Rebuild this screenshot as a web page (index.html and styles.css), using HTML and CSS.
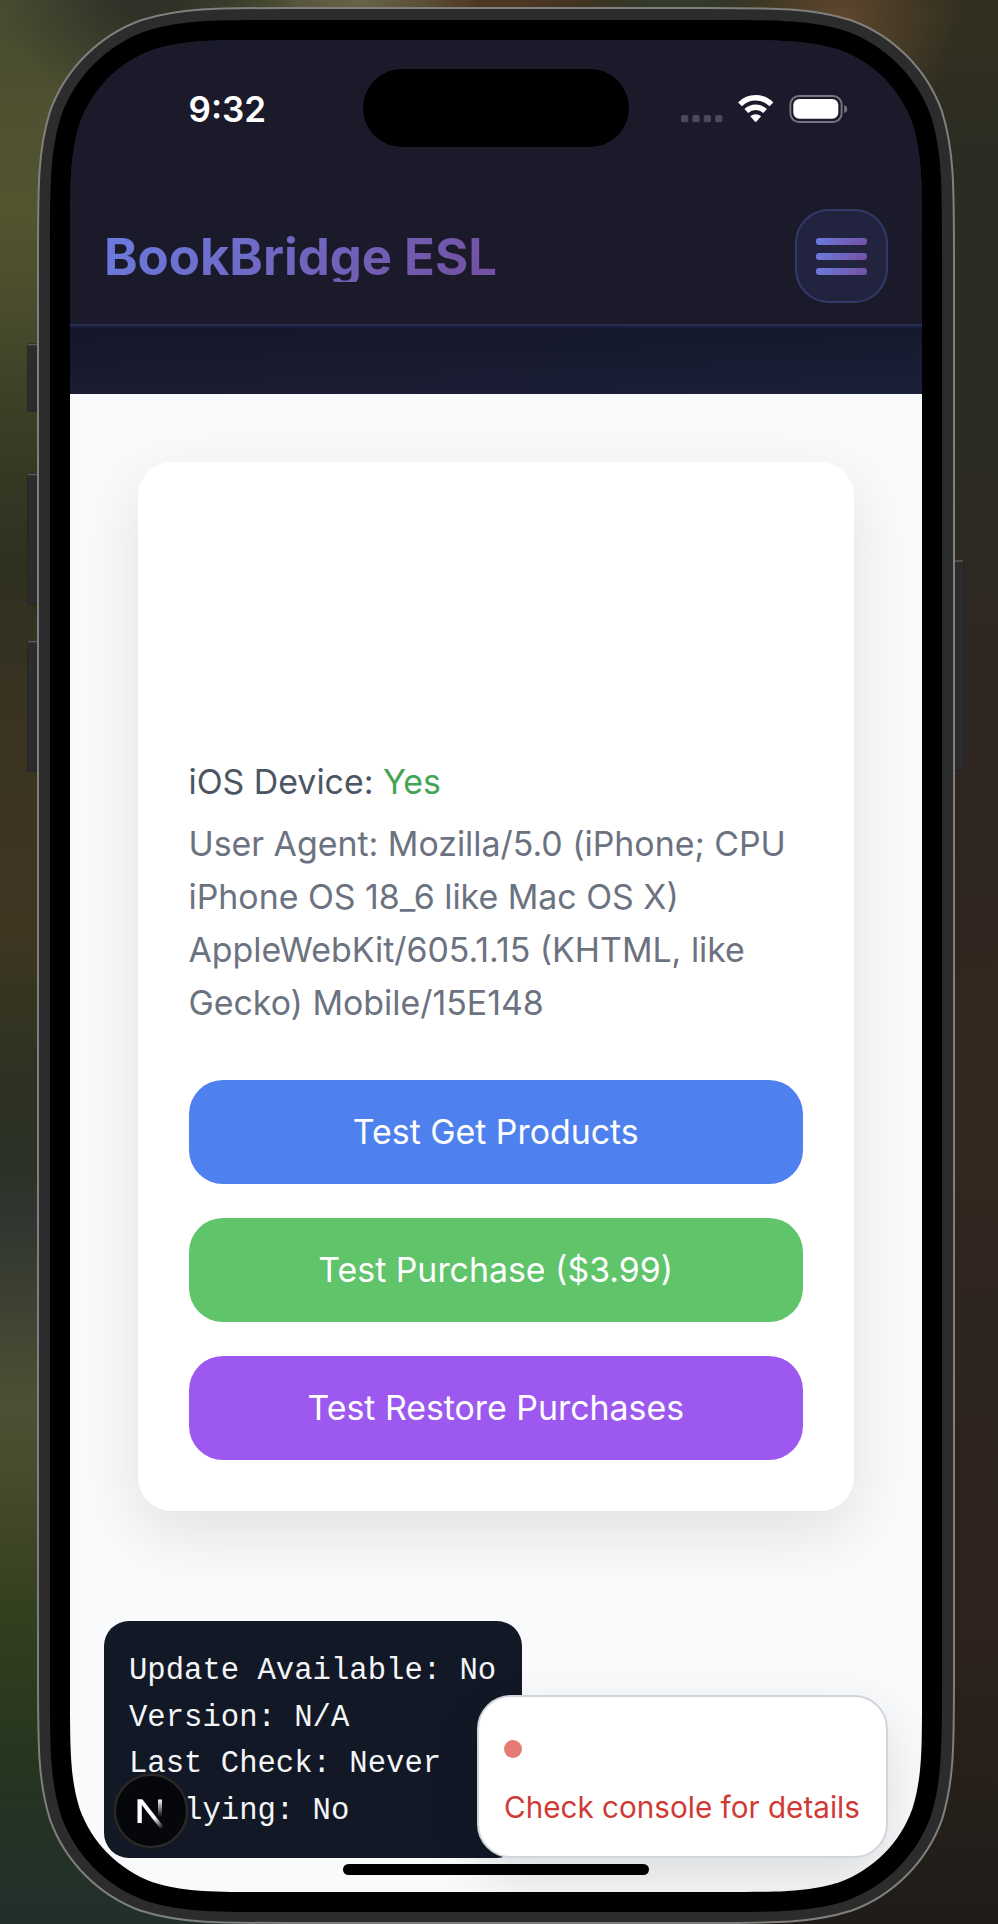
FILE: index.html
```html
<!DOCTYPE html>
<html lang="en">
<head>
<meta charset="utf-8">
<title>BookBridge ESL</title>
<link rel="stylesheet" href="styles.css">
</head>
<body>
<div class="stage">
  <svg class="bezel" viewBox="0 0 998 1924" aria-hidden="true">
    <g fill="#2c2c2c" stroke="#1f1f1a" stroke-opacity=".6" stroke-width="1">
      <rect x="27.500" y="343.500" width="14" height="68" rx="2"/>
      <rect x="27.500" y="473.500" width="14" height="131" rx="2"/>
      <rect x="27.500" y="640.500" width="14" height="131" rx="2"/>
      <rect x="950" y="560.500" width="14" height="210" rx="2"/>
    </g>
    <path d="M28 344.500H38M28 474.500H38M28 641.500H38M955 561H963" stroke="#5c5c56" stroke-width="1.500"/>
    <path d="M287.200 8H704.800c71.800 0 107.700 0 146.300 12.200c42.100 15.400 75.300 48.600 90.700 90.700c12.200 38.600 12.200 74.500 12.200 146.300V1673.800c0 71.800 0 107.700-12.200 146.300c-15.400 42.100-48.600 75.300-90.700 90.700c-38.600 12.200-74.500 12.200-146.300 12.200H287.200c-71.800 0-107.700 0-146.300-12.200c-42.100-15.400-75.300-48.600-90.700-90.700c-12.200-38.600-12.200-74.500-12.200-146.300V257.200c0-71.800 0-107.700 12.200-146.300c15.400-42.100 48.600-75.300 90.700-90.700c38.600-12.200 74.500-12.200 146.300-12.200Z" fill="#2c2c2c" stroke="#7f7f7d" stroke-width="2"/>
    <path d="M280.800 20H711.200c66.400 0 99.700 0 135.400 11.300c39.100 14.200 69.900 45 84.100 84.100c11.300 35.700 11.300 69 11.300 135.400V1681.200c0 66.400 0 99.700-11.300 135.400c-14.200 39.100-45 69.900-84.100 84.100c-35.700 11.300-69 11.300-135.400 11.300H280.800c-66.400 0-99.700 0-135.400-11.300c-39.100-14.200-69.900-45-84.100-84.100c-11.300-35.700-11.300-69-11.300-135.400V250.800c0-66.400 0-99.700 11.300-135.400c14.200-39.100 45-69.900 84.100-84.100c35.700-11.300 69-11.300 135.400-11.300Z" fill="#000"/>
  </svg>
  <div class="screen">
    <header class="header">
      <div class="status">
        <span class="time">9:32</span>
        <span class="island"></span>
        <svg class="indicators" viewBox="0 0 168 30" width="168" height="30" aria-hidden="true">
          <g fill="#4b4a58">
            <rect x="1" y="21" width="7.200" height="7.200" rx="2"/>
            <rect x="12.400" y="21" width="7.200" height="7.200" rx="2"/>
            <rect x="23.800" y="21" width="7.200" height="7.200" rx="2"/>
            <rect x="35.200" y="21" width="7.200" height="7.200" rx="2"/>
          </g>
          <g fill="none" stroke="#fff" stroke-width="5.400">
            <path d="M60 10.400A22 22 0 0 1 91.400 10.400"/>
            <path d="M66.300 17A13.500 13.500 0 0 1 85.100 17"/>
          </g>
          <path d="M70.300 22.300A8 8 0 0 1 81.100 22.300L76.500 27.600Q75.700 28.400 74.900 27.600Z" fill="#fff"/>
          <rect x="110.400" y="2" width="51.200" height="26" rx="8.500" fill="none" stroke="#767582" stroke-width="1.900"/>
          <rect x="113.300" y="5" width="45" height="19.800" rx="6" fill="#fff"/>
          <path d="M164.200 11Q167.200 12 167.200 15T164.200 19Z" fill="#767582"/>
        </svg>
      </div>
      <div class="navbar">
        <div class="brand">BookBridge ESL</div>
        <button class="menu" aria-label="Menu"><i></i><i></i><i></i></button>
      </div>
    </header>
    <div class="band"></div>
    <main class="main">
      <section class="card">
        <div class="info">
          <p class="device">iOS Device: <span class="yes">Yes</span></p>
          <p class="agent">User Agent: Mozilla/5.0 (iPhone; CPU<br>iPhone OS 18_6 like Mac OS X)<br>AppleWebKit/605.1.15 (KHTML, like<br>Gecko) Mobile/15E148</p>
        </div>
        <button class="btn blue">Test Get Products</button>
        <button class="btn green">Test Purchase ($3.99)</button>
        <button class="btn purple">Test Restore Purchases</button>
      </section>
    </main>
    <div class="debug">
      <div>Update Available: No</div>
      <div>Version: N/A</div>
      <div>Last Check: Never</div>
      <div>Applying: No</div>
    </div>
    <div class="toast">
      <span class="dot"></span>
      <span class="toast-text">Check console for details</span>
    </div>
    <svg class="next" viewBox="0 0 78 78" aria-hidden="true">
      <defs>
        <linearGradient id="diag" gradientUnits="userSpaceOnUse" x1="42" y1="46" x2="50" y2="57"><stop stop-color="#fff"/><stop offset="1" stop-color="#fff" stop-opacity="0"/></linearGradient>
        <linearGradient id="stem" gradientUnits="userSpaceOnUse" x1="0" y1="27" x2="0" y2="45"><stop stop-color="#fff"/><stop offset="1" stop-color="#fff" stop-opacity="0"/></linearGradient>
      </defs>
      <circle cx="39" cy="39" r="38.500" fill="#1b1b1c"/>
      <circle cx="39" cy="39" r="36" fill="#06070b" stroke="#2b2b2c" stroke-width="2"/>
      <path d="M25.500 27.500H29.800V51H25.500Z" fill="#fff"/>
      <path d="M25.500 27.500H30.500L51.500 54.500L48.500 57Z" fill="url(#diag)"/>
      <path d="M46 27.500H50V45H46Z" fill="url(#stem)"/>
    </svg>
    <div class="home-bar"></div>
  </div>
</div>
</body>
</html>
```
FILE: styles.css
```css
* { box-sizing: border-box; }

body {
  margin: 0;
  font-family: Inter, "Liberation Sans", sans-serif;
}

.stage {
  position: relative;
  width: 998px;
  height: 1924px;
  padding: 40px 76px 32px 70px;
  overflow: hidden;
  background:
    radial-gradient(ellipse 150px 110px at 150px 0, #2f3327 20%, rgba(47, 51, 39, 0)),
    radial-gradient(ellipse 120px 60px at 360px 0, #6a6149, rgba(106, 97, 73, 0)),
    radial-gradient(ellipse 150px 60px at 490px 0, #4d3723 20%, rgba(77, 55, 35, 0)),
    radial-gradient(ellipse 110px 60px at 675px 0, #333b2a 20%, rgba(51, 59, 42, 0)),
    radial-gradient(ellipse 120px 110px at 840px 20px, #5f472d, rgba(95, 71, 45, 0)),
    linear-gradient(#33301f 0, #2b2b23 180px, #2a2b23 420px, #2f2822 620px, #2f2621 820px, #35281e 1110px, #2e2420 1320px, #2d221d 1640px, #201d18 1900px) 100% 0 / 50% 100% no-repeat,
    linear-gradient(#494b31 0, #53552f 210px, #484a2c 320px, #3c3e26 410px, #2f3020 560px, #3a3321 720px, #3f3622 930px, #343420 1000px, #2a3024 1145px, #30352f 1220px, #4e5035 1405px, #474a2c 1480px, #33401f 1610px, #25351f 1760px, #22302a 1900px) 0 0 / 50% 100% no-repeat;
}

.bezel {
  position: absolute;
  inset: 0;
  width: 998px;
  height: 1924px;
}

.screen {
  position: relative;
  display: flex;
  flex-direction: column;
  width: 852px;
  height: 1852px;
  background: linear-gradient(#1a1a2b 340px, #f9fafc 340px);
  clip-path: path("M200.3 0H651.7C709.4 0 738.2 0 769.3 9.8C803.2 22.1 829.9 48.8 842.2 82.7C852 113.8 852 142.6 852 200.3V1651.7C852 1709.4 852 1738.2 842.2 1769.3C829.9 1803.2 803.2 1829.9 769.3 1842.2C738.2 1852 709.4 1852 651.7 1852H200.3C142.6 1852 113.8 1852 82.7 1842.2C48.8 1829.9 22.1 1803.2 9.8 1769.3C0 1738.2 0 1709.4 0 1651.7V200.3C0 142.6 0 113.8 9.8 82.7C22.1 48.8 48.8 22.1 82.7 9.8C113.8 0 142.6 0 200.3 0Z");
}

.header {
  position: relative;
  z-index: 1;
  flex: none;
  height: 286px;
  background: #1a1a2b;
  border-bottom: 2px solid #272b4e;
  box-shadow: 0 1px 2px #20284a;
}

.status {
  display: grid;
  grid-template-columns: 293px 266px 1fr;
  align-items: center;
  height: 107px;
  padding-top: 29px;
}

.time {
  padding: 2px 0 0 118.5px;
  color: #fff;
  font-size: 35px;
  font-weight: 600;
  line-height: 1;
}

.island {
  height: 78px;
  border-radius: 39px;
  background: #000;
}

.indicators {
  margin: 2px 0 0 51px;
}

.navbar {
  display: flex;
  align-items: center;
  justify-content: space-between;
  height: 94px;
  margin-top: 62px;
  padding: 0 34px;
}

.brand {
  color: transparent;
  font-size: 50.86px;
  font-weight: 700;
  line-height: 51px;
  letter-spacing: -.05px;
  white-space: nowrap;
  background: linear-gradient(135deg, #6b7ce0, #744f9f);
  -webkit-background-clip: text;
  background-clip: text;
}

.menu {
  display: flex;
  flex-direction: column;
  align-items: center;
  justify-content: center;
  gap: 8px;
  width: 93px;
  height: 94px;
  padding: 0;
  border: 2px solid #343a68;
  border-radius: 34px;
  background: #22233e;
}

.menu i {
  width: 51px;
  height: 7px;
  border-radius: 3px;
  background: linear-gradient(135deg, #6b7ce0, #744f9f);
}

.band {
  flex: none;
  height: 68px;
  background:
    linear-gradient(rgba(10, 12, 24, .35), rgba(10, 12, 24, 0)),
    linear-gradient(100deg, #1b1b31, #1a2038);
}

.main {
  padding: 68px;
}

.card {
  display: flex;
  flex-direction: column;
  gap: 34px;
  height: 1049px;
  padding: 293px 51px 51px 50.5px;
  border-radius: 34px;
  background: #fff;
  box-shadow: 0 21px 63px rgba(0, 0, 0, .1);
}

.info {
  flex: none;
  height: 291px;
  font-size: 33.86px;
  line-height: 53px;
  white-space: nowrap;
}

.device {
  margin: 0 0 9px;
  color: #4b5563;
}

.yes { color: #43a554; }

.agent {
  margin: 0;
  color: #6b7280;
}

.btn {
  flex: none;
  height: 104px;
  padding: 0 0 2px;
  border: 0;
  border-radius: 34px;
  color: #fff;
  font: 400 33.86px Inter, sans-serif;
}

.blue { background: #4f81ee; }
.green { background: #5fc46a; }
.purple { background: #9d59ef; }

.debug {
  position: absolute;
  left: 34px;
  top: 1581px;
  width: 418px;
  height: 237px;
  padding: 27px 25px 23px;
  border-radius: 25px;
  background: #121826;
  color: #f4f5f7;
  font-family: "Liberation Mono", monospace;
  font-size: 30.6px;
  line-height: 46.7px;
  white-space: nowrap;
}

.toast {
  position: absolute;
  left: 407px;
  top: 1655px;
  display: flex;
  flex-direction: column;
  gap: 28px;
  width: 411px;
  height: 163px;
  padding: 43px 25px 0;
  border: 2px solid #d1d5db;
  border-radius: 34px;
  background: #fff;
  box-shadow: 0 21px 53px rgba(0, 0, 0, .12);
}

.dot {
  width: 18px;
  height: 18px;
  border-radius: 50%;
  background: #e67a74;
}

.toast-text {
  color: #d03a35;
  font-size: 29.66px;
  line-height: 42px;
  white-space: nowrap;
}

.next {
  position: absolute;
  left: 42px;
  top: 1732px;
  width: 78px;
  height: 78px;
}

.home-bar {
  position: absolute;
  left: 273px;
  top: 1824px;
  width: 306px;
  height: 11px;
  border-radius: 6px;
  background: #000;
}
```
